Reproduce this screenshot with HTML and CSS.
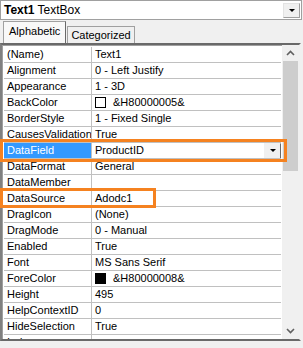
FILE: index.html
```html
<!DOCTYPE html>
<html lang="en">
<head>
    <meta charset="UTF-8">
    <title>Properties - Text1</title>
    <link rel="stylesheet" href="styles.css">
</head>
<body>
    <!-- Object selector -->
    <div class="objbox">
        <span class="objname"><b>Text1</b> TextBox</span>
        <span class="dropbtn"><span class="arrow"></span></span>
    </div>

    <!-- Tabs -->
    <div class="tabs">
        <div class="tab active">Alphabetic</div>
        <div class="tab">Categorized</div>
    </div>

    <!-- Property grid -->
    <div class="sheet">
        <div class="rows">
            <div class="row"><div class="name">(Name)</div><div class="value">Text1</div></div>
            <div class="row"><div class="name">Alignment</div><div class="value">0 - Left Justify</div></div>
            <div class="row"><div class="name">Appearance</div><div class="value">1 - 3D</div></div>
            <div class="row"><div class="name">BackColor</div><div class="value"><span class="swatch"></span>&amp;H80000005&amp;</div></div>
            <div class="row"><div class="name">BorderStyle</div><div class="value">1 - Fixed Single</div></div>
            <div class="row"><div class="name">CausesValidation</div><div class="value">True</div></div>
            <div class="row selected"><div class="name">DataField</div><div class="value">ProductID<span class="dropbtn small"><span class="arrow"></span></span></div></div>
            <div class="row"><div class="name">DataFormat</div><div class="value">General</div></div>
            <div class="row"><div class="name">DataMember</div><div class="value"></div></div>
            <div class="row"><div class="name">DataSource</div><div class="value">Adodc1</div></div>
            <div class="row"><div class="name">DragIcon</div><div class="value">(None)</div></div>
            <div class="row"><div class="name">DragMode</div><div class="value">0 - Manual</div></div>
            <div class="row"><div class="name">Enabled</div><div class="value">True</div></div>
            <div class="row"><div class="name">Font</div><div class="value">MS Sans Serif</div></div>
            <div class="row"><div class="name">ForeColor</div><div class="value"><span class="swatch black"></span>&amp;H80000008&amp;</div></div>
            <div class="row"><div class="name">Height</div><div class="value">495</div></div>
            <div class="row"><div class="name">HelpContextID</div><div class="value">0</div></div>
            <div class="row"><div class="name">HideSelection</div><div class="value">True</div></div>
            <div class="row"><div class="name">Index</div><div class="value"></div></div>
        </div>
        <div class="scroll">
            <div class="sbtn up">
                <svg width="9" height="6" viewBox="0 0 9 6"><path d="M1 5 L4.5 1.5 L8 5" fill="none" stroke="#606060" stroke-width="1.6"/></svg>
            </div>
            <div class="thumb"></div>
            <div class="track"></div>
            <div class="sbtn down">
                <svg width="9" height="6" viewBox="0 0 9 6"><path d="M1 1 L4.5 4.5 L8 1" fill="none" stroke="#606060" stroke-width="1.6"/></svg>
            </div>
        </div>

        <!-- highlight boxes -->
        <div class="mark mark-field"></div>
        <div class="mark mark-source"></div>
    </div>
</body>
</html>
```

FILE: styles.css
```css
/* General Styles */
body {
    margin: 0;
    width: 303px;
    height: 348px;
    overflow: hidden;
    background-color: #f0f0f0;
    font-family: "Liberation Sans", Arial, sans-serif;
    font-size: 11px;
    color: #000;
}

/* Object selector */
.objbox {
    height: 18px;
    margin-right: 1px;
    border: 1px solid #a0a0a0;
    background-color: #fff;
    display: flex;
    align-items: center;
    justify-content: space-between;
}

.objname {
    padding-left: 3px;
    font-size: 12px;
}

.dropbtn {
    width: 15px;
    height: 13px;
    margin-right: 1px;
    background-color: #f0f0f0;
    border: 1px solid #e3e3e3;
    border-right-color: #a0a0a0;
    border-bottom-color: #a0a0a0;
    display: flex;
    align-items: center;
    justify-content: center;
}

.arrow {
    width: 0;
    height: 0;
    border-left: 3px solid transparent;
    border-right: 3px solid transparent;
    border-top: 3px solid #000;
}

/* Tabs */
.tabs {
    height: 23px;
    padding-left: 3px;
    display: flex;
    align-items: flex-end;
}

.tab {
    height: 16px;
    padding: 0 3px;
    border: 1px solid #a0a0a0;
    border-bottom: none;
    background-color: #f0f0f0;
    font-size: 11px;
    line-height: 17px;
}

.tab.active {
    height: 21px;
    padding: 0 5px;
    line-height: 19px;
    background-color: #f8f8f8;
    border-right-color: #696969;
    margin-right: 1px;
}

/* Property grid */
.sheet {
    position: relative;
    height: 294px;
    margin-right: 2px;
    border: 2px solid #696969;
    border-left-color: #808080;
    border-right-color: #f0f0f0;
    border-bottom-color: #696969;
    box-shadow: inset 1px 1px 0 #a0a0a0;
    background-color: #fff;
    display: flex;
}

.rows {
    flex: 1;
    overflow: hidden;
    padding-top: 2px;
    padding-left: 1px;
    border-left: 1px solid #a0a0a0;
}

.row {
    height: 15px;
    border-bottom: 1px solid #c0c0c0;
    display: grid;
    grid-template-columns: 88px 1fr;
    line-height: 15px;
    font-size: 11px;
    white-space: nowrap;
}

.name {
    padding-left: 3px;
    border-right: 1px solid #c0c0c0;
    overflow: hidden;
}

.value {
    padding-left: 3px;
    display: flex;
    align-items: center;
    overflow: hidden;
}

.row.selected .name {
    background-color: #3399ff;
    color: #fff;
}

.row.selected .value {
    justify-content: space-between;
}

.dropbtn.small {
    width: 15px;
    height: 14px;
    margin-right: 0;
    border-color: #f0f0f0 #696969 #696969 #f0f0f0;
}

.swatch {
    width: 11px;
    height: 11px;
    box-sizing: border-box;
    border: 1px solid #000;
    background-color: #fff;
    margin-right: 7px;
}

.swatch.black {
    background-color: #000;
}

/* Scrollbar */
.scroll {
    width: 17px;
    margin-left: 1px;
    background-color: #f0f0f0;
    display: flex;
    flex-direction: column;
}

.sbtn {
    height: 16px;
    display: flex;
    align-items: center;
    justify-content: center;
}

.thumb {
    height: 110px;
    margin: 0 1px;
    background-color: #cdcdcd;
}

.track {
    flex: 1;
}

/* Highlight boxes */
.mark {
    position: absolute;
    border: 3px solid #f58220;
}

.mark-field {
    left: -2px;
    top: 94px;
    width: 281px;
    height: 17px;
}

.mark-source {
    left: -2px;
    top: 143px;
    width: 150px;
    height: 14px;
}
```
